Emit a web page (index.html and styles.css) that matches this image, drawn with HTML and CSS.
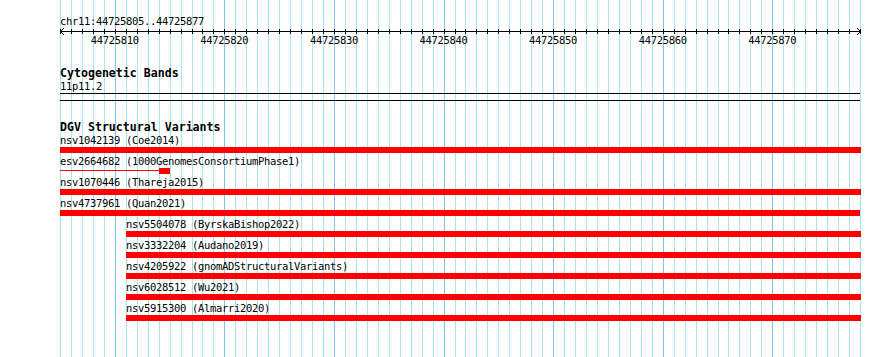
FILE: index.html
```html
<!DOCTYPE html>
<html lang="en">
<head>
  <meta charset="UTF-8" />
  <meta name="viewport" content="width=device-width, initial-scale=1" />
  <title>chr11:44725805..44725877</title>
  <link rel="stylesheet" href="styles.css">
</head>
<body>
  <div class="panel">
    <svg class="grid" id="grid" width="890" height="357"></svg>

    <div class="content">
      <div class="ruler">
        <div class="ruler-title">chr11:44725805..44725877</div>
        <svg class="ruler-axis" id="axis" width="802" height="7"></svg>
        <div class="ruler-labels">
          <span>44725810</span>
          <span>44725820</span>
          <span>44725830</span>
          <span>44725840</span>
          <span>44725850</span>
          <span>44725860</span>
          <span>44725870</span>
        </div>
      </div>

      <div class="track cyto">
        <div class="track-title">Cytogenetic Bands</div>
        <div class="label band-name">11p11.2</div>
        <div class="band"></div>
      </div>

      <div class="track dgv">
        <div class="track-title">DGV Structural Variants</div>
        <div class="features">
          <div class="feature">
            <div class="label">nsv1042139 (Coe2014)</div>
            <div class="bar"></div>
          </div>
          <div class="feature">
            <div class="label">esv2664682 (1000GenomesConsortiumPhase1)</div>
            <div class="bar split">
              <div class="thin"></div>
              <div class="block"></div>
            </div>
          </div>
          <div class="feature">
            <div class="label">nsv1070446 (Thareja2015)</div>
            <div class="bar"></div>
          </div>
          <div class="feature">
            <div class="label">nsv4737961 (Quan2021)</div>
            <div class="bar short"></div>
          </div>
          <div class="feature inset">
            <div class="label">nsv5504078 (ByrskaBishop2022)</div>
            <div class="bar"></div>
          </div>
          <div class="feature inset">
            <div class="label">nsv3332204 (Audano2019)</div>
            <div class="bar"></div>
          </div>
          <div class="feature inset">
            <div class="label">nsv4205922 (gnomADStructuralVariants)</div>
            <div class="bar"></div>
          </div>
          <div class="feature inset">
            <div class="label">nsv6028512 (Wu2021)</div>
            <div class="bar"></div>
          </div>
          <div class="feature inset">
            <div class="label">nsv5915300 (Almarri2020)</div>
            <div class="bar"></div>
          </div>
        </div>
      </div>
    </div>
  </div>

  <script>
    const svgNS = 'http://www.w3.org/2000/svg';
    const start = 44725805;
    const bases = 73;
    const scale = 800 / bases;
    const grid = document.getElementById('grid');
    const axis = document.getElementById('axis');

    let ticks = 'M0 3.5H800.5';
    for (let k = 0; k <= bases; k++) {
      const x = Math.round(k * scale) + 0.5;
      const line = document.createElementNS(svgNS, 'line');
      line.setAttribute('x1', 60 + x);
      line.setAttribute('x2', 60 + x);
      line.setAttribute('y1', 0);
      line.setAttribute('y2', 357);
      line.setAttribute('class', (start + k) % 10 === 0 ? 'major' : 'minor');
      grid.appendChild(line);
      ticks += ' M' + x + ' 1V6';
    }
    // arrow heads at both ends
    ticks += ' M4 0L0.5 3.5L4 7 M797 0L800.5 3.5L797 7';

    const path = document.createElementNS(svgNS, 'path');
    path.setAttribute('d', ticks);
    axis.appendChild(path);
  </script>
</body>
</html>
```

FILE: styles.css
```css
body {
  margin: 0;
  background: #ffffff;
  color: #000000;
  font-family: "DejaVu Sans Mono", "Liberation Mono", monospace;
  font-size: 10.5px;
  letter-spacing: -0.32px;
}

.panel {
  position: relative;
  width: 890px;
  height: 357px;
  overflow: hidden;
}

.grid {
  position: absolute;
  top: 0;
  left: 0;
  shape-rendering: crispEdges;
}

.grid line {
  stroke-width: 1;
}

.grid .minor {
  stroke: #a8e6ee;
}

.grid .major {
  stroke: #84c4ea;
}

.content {
  position: relative;
  z-index: 1;
  padding-top: 15px;
}

.ruler-title {
  margin-left: 60px;
  line-height: 13px;
}

.ruler-axis {
  display: block;
  margin-left: 60px;
  shape-rendering: crispEdges;
}

.ruler-axis path {
  fill: none;
  stroke: #000000;
  stroke-width: 1;
}

.ruler-labels {
  display: flex;
  margin-left: 60px;
  line-height: 11px;
  padding-bottom: 1px;
}

.ruler-labels span {
  width: 109.589px;
  text-align: center;
}

.track {
  margin-left: 60px;
}

.track-title {
  font-size: 11.6px;
  font-weight: bold;
  letter-spacing: 0;
  line-height: 11px;
}

.label {
  line-height: 11px;
  padding-bottom: 1px;
  white-space: nowrap;
}

.cyto {
  margin-top: 21px;
}

.band-name {
  margin-top: 2px;
}

.band {
  width: 800px;
  height: 6px;
  border-top: 1px solid #000000;
  border-bottom: 1px solid #000000;
}

.dgv {
  margin-top: 21px;
}

.features {
  padding-top: 2px;
}

.feature {
  margin-bottom: 3px;
}

.feature.inset {
  margin-left: 66px;
}

.bar {
  width: 801px;
  height: 6px;
  background: #ff0000;
}

.bar.short {
  width: 800px;
}

.feature.inset .bar {
  width: 735px;
}

.bar.split {
  display: flex;
  align-items: flex-start;
  background: none;
}

.split .thin {
  width: 99px;
  height: 1px;
  margin-top: 2px;
  background: #ff0000;
}

.split .block {
  width: 11px;
  height: 6px;
  background: #ff0000;
}
```
